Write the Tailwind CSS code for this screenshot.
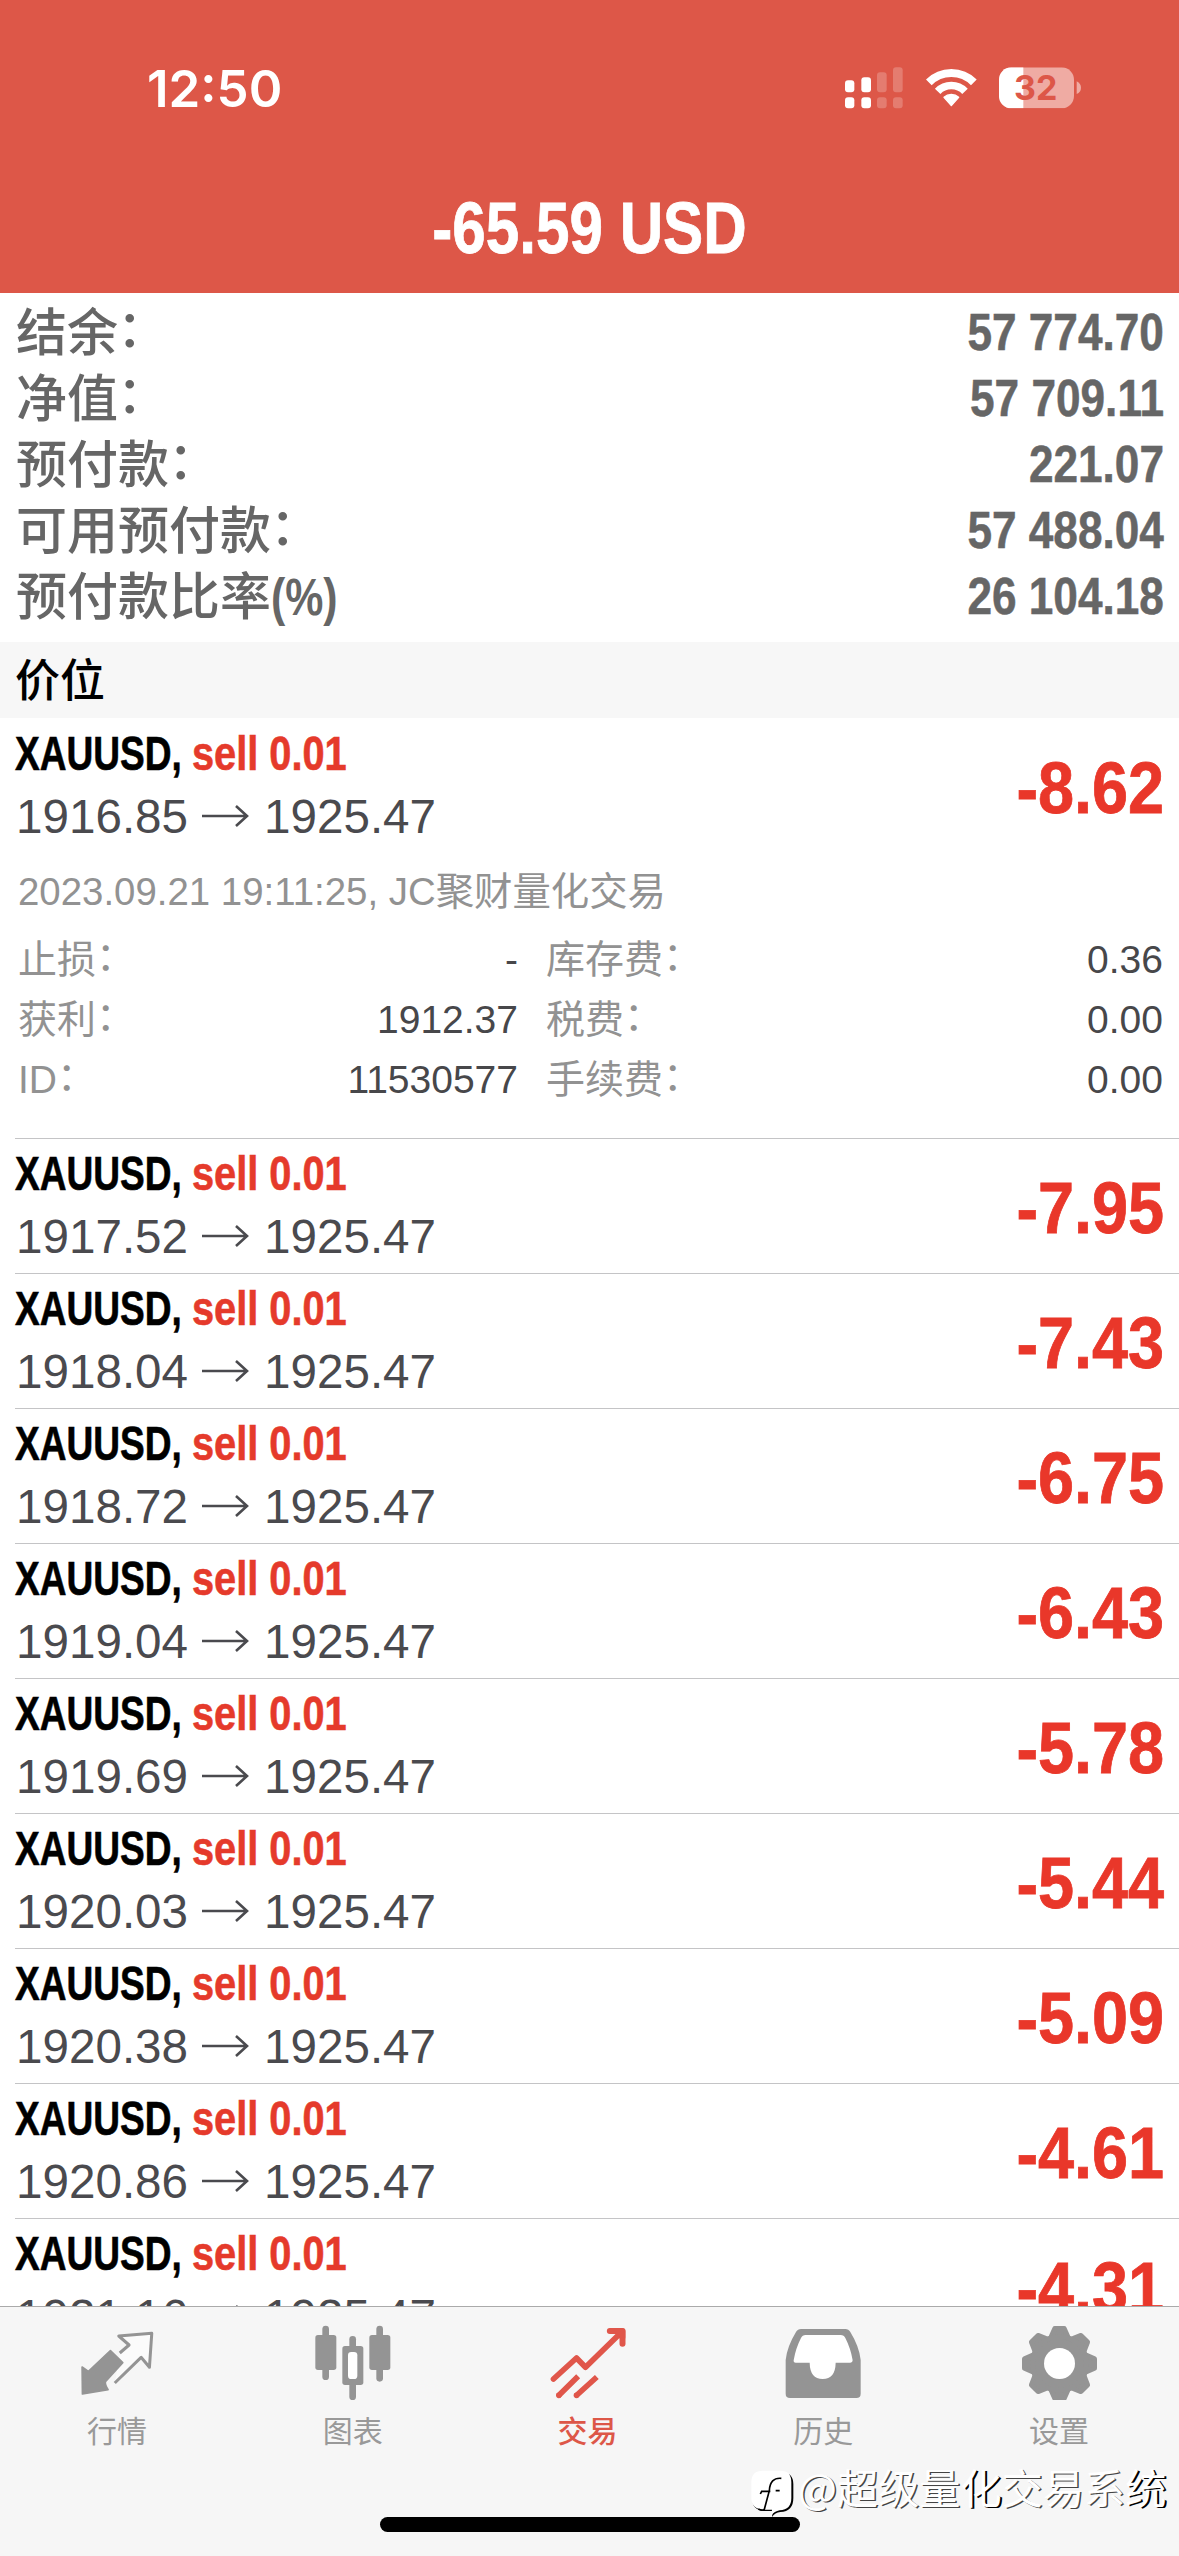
<!DOCTYPE html>
<html lang="zh-CN">
<head>
<meta charset="utf-8">
<title>交易</title>
<script src="https://cdn.jsdelivr.net/npm/@tailwindcss/browser@4"></script>
</head>
<body class="bg-white">
<div class="relative flex h-[2556px] w-[1179px] flex-col overflow-hidden bg-white font-['Liberation_Sans','Noto_Sans_CJK_SC',sans-serif]">

  <header class="h-[293px] shrink-0 bg-[#dd5748] text-white">
    <div class="flex h-[177px] items-start justify-between pt-[58px] pr-[97px] pl-[147px]">
      <div class="origin-left font-['Inter',sans-serif] text-[51px] leading-[62px] font-semibold">12:50</div>
      <div class="flex items-center gap-[22px] pt-[8px]">
        <svg class="h-[43px] w-[60px]" viewBox="75 47 180 129" fill="#fff">
          <rect x="78" y="90" width="28" height="36" rx="9"/><rect x="127" y="81" width="29" height="45" rx="9"/>
          <rect x="78" y="141" width="28" height="33" rx="9"/><rect x="127" y="141" width="29" height="33" rx="9"/>
          <g opacity=".22"><rect x="174" y="66" width="29" height="60" rx="9"/><rect x="222" y="51" width="29" height="75" rx="9"/>
          <rect x="174" y="141" width="29" height="33" rx="9"/><rect x="222" y="141" width="29" height="33" rx="9"/></g>
        </svg>
        <svg class="h-[43px] w-[51px]" viewBox="318 47 153 129" fill="none" stroke="#fff">
          <path d="M326.500 96 A95 95 0 0 1 461.500 96" stroke-width="24"/>
          <path d="M353 123 A57 57 0 0 1 435 123" stroke-width="23"/>
          <path d="M372 141 A32 32 0 0 1 416 141 L394 166 Z" fill="#fff" stroke-width="4" stroke-linejoin="round"/>
        </svg>
        <svg class="h-[43px] w-[83px]" viewBox="537 47 249 129">
          <defs><clipPath id="cell"><rect x="537" y="51" width="225" height="123" rx="37"/></clipPath></defs>
          <g clip-path="url(#cell)"><rect x="537" y="51" width="225" height="123" fill="#efaba3"/><rect x="537" y="51" width="73" height="123" fill="#fff"/></g>
          <path d="M770 93 Q783 100 783 112 Q783 125 770 131 Z" fill="#efaba3"/>
          <text x="582" y="150" textLength="130" lengthAdjust="spacingAndGlyphs" font-family="Inter, sans-serif" font-weight="700" font-size="103" fill="#dd5748">32</text>
        </svg>
      </div>
    </div>
    <h1 class="scale-x-[0.836] text-center text-[72px] leading-[102px] font-bold [-webkit-text-stroke:0.8px_currentColor]">-65.59 USD</h1>
  </header>

  <section id="summary" class="h-[349px] shrink-0 pt-[7px] pr-[15px] pl-[15px] text-[51px] leading-[66px] text-[#666]"></section>

  <h2 class="h-[76px] shrink-0 bg-[#f7f7f7] pl-[15px] text-[45px] leading-[79px] font-medium text-black">价位</h2>

  <main class="min-h-0 flex-1 overflow-hidden">
    <div id="first"></div>
    <div class="h-[290px] pt-[14px] pr-4 pl-[18px] text-[39px] leading-[60px] text-[#929292]">
      <p class="text-[38.4px]">2023.09.21 19:11:25, JC聚财量化交易</p>
      <div class="mt-[8px] grid grid-cols-[500px_1fr] gap-x-[28px] text-[#929292]">
        <div class="flex justify-between"><span>止损<span class="inline-block -translate-y-[3px]">：</span></span><span class="text-[#47474a]">-</span></div>
        <div class="flex justify-between"><span>库存费<span class="inline-block -translate-y-[3px]">：</span></span><span class="text-[#47474a]">0.36</span></div>
        <div class="flex justify-between"><span>获利<span class="inline-block -translate-y-[3px]">：</span></span><span class="text-[#47474a]">1912.37</span></div>
        <div class="flex justify-between"><span>税费<span class="inline-block -translate-y-[3px]">：</span></span><span class="text-[#47474a]">0.00</span></div>
        <div class="flex justify-between"><span>ID<span class="inline-block -translate-y-[3px]">：</span></span><span class="text-[#47474a]">11530577</span></div>
        <div class="flex justify-between"><span>手续费<span class="inline-block -translate-y-[3px]">：</span></span><span class="text-[#47474a]">0.00</span></div>
      </div>
    </div>
    <div id="rest" class="ml-[15px]"></div>
  </main>

  <nav class="relative grid h-[250px] shrink-0 grid-cols-5 border-t border-[#aaa] bg-[#f6f6f6] pt-[13px] text-center text-[30px] leading-[40px] text-[#999]">
    <div class="flex flex-col items-center gap-[12px]">
      <svg class="size-[80px]" viewBox="53.700 60 240 240" stroke-linejoin="round">
        <path d="M179 159 L207 135 L176 108 L275 100 L268 202 L243 172 L164 249" fill="#fff" fill-opacity=".6" stroke="#949494" stroke-width="9"/>
        <path d="M66 201 L85 214 L151 152 L188 188 L136 245 Q134 254 144 269 L67 282 Z" fill="#949494" stroke="#949494" stroke-width="5"/>
      </svg>
      <span class="-translate-x-px">行情</span>
    </div>
    <div class="flex flex-col items-center gap-[12px]">
      <svg class="size-[80px]" viewBox="761 60 240 240" fill="#949494">
        <rect x="786" y="77" width="20" height="163" rx="10"/><rect x="765" y="105" width="63" height="105" rx="8"/>
        <rect x="867" y="108" width="20" height="192" rx="10"/><rect x="846" y="138" width="63" height="117" rx="8"/>
        <rect x="863" y="156" width="28" height="81" rx="10" fill="#fff"/>
        <rect x="948" y="77" width="20" height="168" rx="10"/><rect x="927" y="105" width="63" height="105" rx="8"/>
      </svg>
      <span class="-translate-x-px">图表</span>
    </div>
    <div class="flex flex-col items-center gap-[12px] text-[#dd5748]">
      <svg class="size-[80px]" viewBox="58.500 60 240 240" fill="none" stroke="#e0564a" stroke-width="17" stroke-linecap="round" stroke-linejoin="round">
        <path d="M72 237 L141 174 L168 202 L274 98"/>
        <path d="M241 93 H279 V131" stroke-width="18"/>
        <path d="M262 93 L279 93 L279 112 Z" fill="#e0564a"/>
        <g stroke-linecap="butt"><path d="M86 288 L146 229 M139 288 L202 231"/></g>
        <g fill="#e0564a" stroke="none"><circle cx="88" cy="286" r="8.500"/><circle cx="141" cy="286" r="8.500"/></g>
      </svg>
      <span class="-translate-x-[2px] font-medium">交易</span>
    </div>
    <div class="flex flex-col items-center gap-[12px]">
      <svg class="size-[80px]" viewBox="766 60 240 240">
        <path d="M814 87 H947 Q957 87 962 96 Q989 140 993 180 V281 Q993 294 980 294 H781 Q768 294 768 281 V180 Q772 140 799 96 Q804 87 814 87 Z" fill="#949494"/>
        <path d="M828 105 H933 Q943 105 947 114 Q963 145 969 181 Q969 188 962 188 H918 Q917 237 879 237 Q841 237 840 188 H798 Q791 188 792 181 Q798 145 814 114 Q818 105 828 105 Z" fill="#fff"/>
      </svg>
      <span class="-translate-x-[2px]">历史</span>
    </div>
    <div class="flex flex-col items-center gap-[12px]">
      <svg class="size-[80px]" viewBox="-115.500 -130.500 240 240">
        <defs><path id="tooth" d="M-27 -76 L-14 -105 H14 L27 -76 Z"/></defs>
        <g fill="#949494" stroke="#949494" stroke-width="15" stroke-linejoin="round">
          <use href="#tooth"/><use href="#tooth" transform="rotate(45)"/><use href="#tooth" transform="rotate(90)"/><use href="#tooth" transform="rotate(135)"/>
          <use href="#tooth" transform="rotate(180)"/><use href="#tooth" transform="rotate(225)"/><use href="#tooth" transform="rotate(270)"/><use href="#tooth" transform="rotate(315)"/>
          <circle r="81"/>
        </g>
        <circle r="46.500" fill="#fff"/>
      </svg>
      <span class="-translate-x-[2px]">设置</span>
    </div>
    <div class="absolute top-[210px] left-[380px] h-[15px] w-[420px] rounded-full bg-black"></div>
    <div class="absolute top-[158px] left-[751px] flex items-start gap-[4px] text-white">
      <svg class="mt-[5px] h-[48px] w-[43px]" viewBox="34 88 129 144">
        <path d="M72 96 H128 Q161 96 161 130 V172 Q161 213 122 214 Q106 216 97 229 L99 211 H72 Q38 208 38 176 V130 Z" fill="#000"/>
        <path d="M70 90 H122 Q155 90 155 124 V172 Q155 207 120 209 Q104 212 95 225 L97 207 H72 Q35 205 35 172 V124 Q35 90 70 90 Z" fill="#fff"/>
        <path d="M125 113 Q91 110 89 150 L74 206 Q68 212 56 205 M62 160 L66 152 H92 M108 150 H120" fill="none" stroke="#000" stroke-width="5"/>
      </svg>
      <span class="text-[41.200px] leading-[42px] whitespace-nowrap font-['Noto_Sans_CJK_SC',sans-serif] [text-shadow:1.5px_1px_0.5px_#444]">@超级量<span class="[text-shadow:2px_1px_0.5px_#000]">化</span>交易系<span class="[text-shadow:2px_1px_0.5px_#000]">统</span></span>
    </div>
  </nav>
</div>

<script>
const summary = [["结余","57 774.70"],["净值","57 709.11"],["预付款","221.07"],["可用预付款","57 488.04"],["预付款比率","26 104.18"]];
document.getElementById("summary").innerHTML = summary.map(([k, v], i) => `
  <div class="flex justify-between">
    <span class="flex translate-x-px translate-y-px font-medium">${k}${i === 4 ? '<span class="inline-block origin-left scale-x-[0.84] font-bold">(%)</span>' : '<span class="inline-block -translate-x-px -translate-y-[4px]">：</span>'}</span>
    <span class="inline-block origin-right scale-x-[0.866] font-bold [-webkit-text-stroke:0.5px_currentColor]">${v}</span>
  </div>`).join("");

const row = ([open, profit], box) => `
  <div class="flex items-start justify-between pr-[15px] ${box}">
    <div class="leading-[63px]">
      <div class="flex text-[48px] font-bold [-webkit-text-stroke:0.6px_currentColor]">
        <span class="w-[177px] origin-left scale-x-[0.772] whitespace-nowrap text-black">XAUUSD,</span>
        <span class="origin-left scale-x-[0.828] whitespace-nowrap text-[#e53a2b]">sell 0.01</span>
      </div>
      <div class="flex items-center pl-px text-[47.600px] text-[#4a4a4e]">
        <span class="w-[186px]">${open}</span>
        <svg class="mr-[15px] h-[24px] w-[47px]" viewBox="0 0 47 24" fill="none" stroke="#4a4a4e" stroke-width="2.600"><path d="M0 11 H45 M34 1 L45 11 L34 21"/></svg>
        <span>1925.47</span>
      </div>
    </div>
    <div class="mt-[30px] origin-right scale-x-[0.9] text-[72px] leading-[72px] font-bold text-[#e9372a] [-webkit-text-stroke:0.8px_currentColor]">${profit}</div>
  </div>`;

document.getElementById("first").innerHTML = row(["1916.85", "-8.62"], "h-[130px] pt-[4px] pl-[15px]");
document.getElementById("rest").innerHTML = [
  ["1917.52","-7.95"],["1918.04","-7.43"],["1918.72","-6.75"],["1919.04","-6.43"],["1919.69","-5.78"],
  ["1920.03","-5.44"],["1920.38","-5.09"],["1920.86","-4.61"],["1921.16","-4.31"]
].map(r => row(r, "h-[135px] border-t border-[#c4c4c6] pt-[3px]")).join("");
</script>
</body>
</html>
